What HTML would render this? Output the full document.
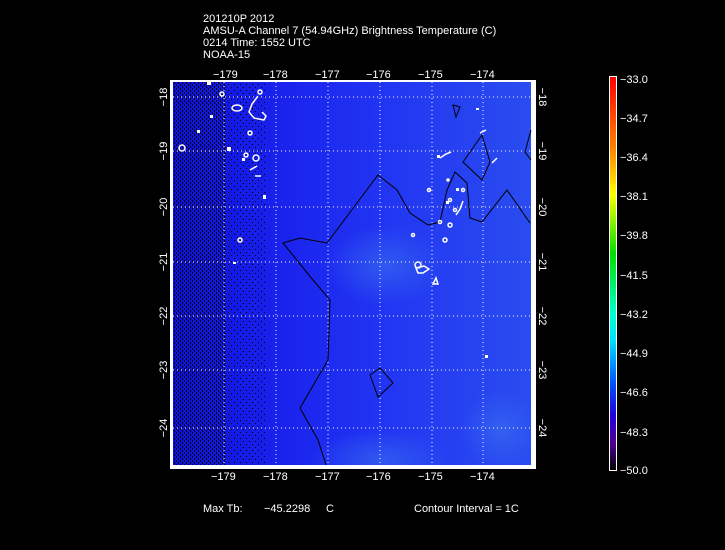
<!DOCTYPE html>
<html><head><style>
html,body{margin:0;padding:0;background:#000;width:725px;height:550px;overflow:hidden}
svg{display:block}
text{font-family:"Liberation Sans",sans-serif;fill:#fff;font-size:11px}
</style></head><body>
<svg width="725" height="550" viewBox="0 0 725 550">
<defs>
<linearGradient id="bg" x1="0" y1="0" x2="1" y2="0">
<stop offset="0" stop-color="#0c10d8"/>
<stop offset="0.3" stop-color="#1a22ee"/>
<stop offset="0.6" stop-color="#2236f2"/>
<stop offset="1" stop-color="#2a4cf0"/>
</linearGradient>
<radialGradient id="spot" cx="0.5" cy="0.5" r="0.5">
<stop offset="0" stop-color="#3a70f0" stop-opacity="0.6"/>
<stop offset="1" stop-color="#3a70f0" stop-opacity="0"/>
</radialGradient>
<linearGradient id="cb" x1="0" y1="0" x2="0" y2="1">
<stop offset="0" stop-color="#ff0000"/>
<stop offset="0.18" stop-color="#ff8000"/>
<stop offset="0.3" stop-color="#ffff00"/>
<stop offset="0.45" stop-color="#00e000"/>
<stop offset="0.6" stop-color="#00ffcc"/>
<stop offset="0.67" stop-color="#00e0ff"/>
<stop offset="0.78" stop-color="#0050ff"/>
<stop offset="0.86" stop-color="#2000e0"/>
<stop offset="0.93" stop-color="#500090"/>
<stop offset="1" stop-color="#000000"/>
</linearGradient>
<pattern id="hatch" width="4" height="4" patternUnits="userSpaceOnUse">
<rect x="0" y="0" width="1" height="2" fill="#000"/>
<rect x="2" y="2" width="1" height="2" fill="#000"/>
</pattern>
<pattern id="hatch2" width="6" height="6" patternUnits="userSpaceOnUse">
<rect x="0" y="0" width="1" height="1" fill="#000"/>
<rect x="3" y="3" width="1" height="1" fill="#000"/>
</pattern>
<clipPath id="plot"><rect x="173" y="82" width="358" height="383"/></clipPath>
</defs>
<text x="203" y="22">201210P 2012</text>
<text x="203" y="34">AMSU-A Channel 7 (54.94GHz) Brightness Temperature (C)</text>
<text x="203" y="46">0214 Time: 1552 UTC</text>
<text x="203" y="58">NOAA-15</text>

<rect x="170" y="80" width="366" height="389" fill="#fff"/>
<g clip-path="url(#plot)">
<rect x="173" y="82" width="358" height="383" fill="url(#bg)"/>
<ellipse cx="385" cy="265" rx="60" ry="40" fill="url(#spot)"/>
<ellipse cx="380" cy="460" rx="70" ry="30" fill="url(#spot)"/>
<ellipse cx="500" cy="430" rx="40" ry="40" fill="url(#spot)"/>
<rect x="173" y="82" width="52" height="383" fill="url(#hatch)"/>
<rect x="225" y="82" width="40" height="383" fill="url(#hatch2)"/>
</g>

<g stroke="#fff" stroke-width="1" stroke-dasharray="1,3" fill="none">
<line x1="224" y1="82" x2="224" y2="465"/><line x1="276" y1="82" x2="276" y2="465"/>
<line x1="328" y1="82" x2="328" y2="465"/><line x1="380" y1="82" x2="380" y2="465"/>
<line x1="432" y1="82" x2="432" y2="465"/><line x1="483" y1="82" x2="483" y2="465"/>
<line x1="173" y1="97" x2="531" y2="97"/><line x1="173" y1="151" x2="531" y2="151"/>
<line x1="173" y1="207" x2="531" y2="207"/><line x1="173" y1="262" x2="531" y2="262"/>
<line x1="173" y1="316" x2="531" y2="316"/><line x1="173" y1="370" x2="531" y2="370"/>
<line x1="173" y1="428" x2="531" y2="428"/>
</g>
<g stroke="#000" stroke-width="1" fill="none">
<polyline points="313,280 283,243 300,238 327,243 378,175 397,190 410,213 428,225 440,222 447,190 455,172 467,183 470,218 482,222 507,190 530,223"/>
<polyline points="313,280 330,300 328,360 300,408 318,440 326,465"/>
<polygon points="453,105 460,107 456,117"/>
<polygon points="482,135 463,162 482,180 490,162"/>
<polyline points="531,130 525,152 531,160"/>
<polygon points="370,375 380,368 393,383 378,397"/>
</g>
<g stroke="#fff" stroke-width="1.5" fill="none">
<circle cx="182" cy="148" r="3"/><circle cx="222" cy="94" r="2"/>
<path d="M258,96 l-6,8 l-3,8 l5,6 l10,2 l2,-4 l-4,-4"/>
<circle cx="260" cy="92" r="2"/>
<ellipse cx="237" cy="108" rx="5" ry="3"/>
<circle cx="250" cy="133" r="2"/><circle cx="246" cy="155" r="2"/>
<circle cx="256" cy="158" r="3"/><path d="M250,170 l7,-4 M255,176 l6,0"/>
<circle cx="240" cy="240" r="2"/><circle cx="418" cy="265" r="3"/>
<path d="M416,268 l8,-2 l5,3 l-6,4 l-5,0z"/>
<path d="M433,284 l3,-6 l2,6z"/>
<path d="M440,158 l6,-4 l5,-2"/><path d="M480,133 l6,-3"/>
<path d="M492,163 l5,-5"/>
<circle cx="450" cy="200" r="1.5"/><circle cx="455" cy="210" r="1.5"/>
<circle cx="463" cy="190" r="1.5"/><circle cx="450" cy="225" r="2"/>
<circle cx="445" cy="240" r="2"/><circle cx="413" cy="235" r="1.5"/>
<circle cx="440" cy="222" r="1.5"/><circle cx="429" cy="190" r="1.5"/>
<circle cx="448" cy="180" r="1"/>
<path d="M456,215 l4,-6 l3,-8"/>
</g>
<g fill="#fff">
<rect x="207" y="82" width="4" height="3"/><rect x="210" y="115" width="3" height="3"/>
<rect x="197" y="130" width="3" height="3"/><rect x="227" y="147" width="4" height="4"/>
<rect x="242" y="158" width="3" height="3"/><rect x="263" y="195" width="3" height="4"/>
<rect x="233" y="262" width="3" height="2"/><rect x="485" y="355" width="3" height="3"/>
<rect x="446" y="201" width="3" height="3"/><rect x="456" y="188" width="3" height="3"/>
<rect x="437" y="155" width="3" height="3"/><rect x="476" y="108" width="3" height="2"/>
</g>

<g>
<text x="213" y="78">−179</text><text x="263" y="78">−178</text><text x="315" y="78">−177</text>
<text x="366" y="78">−176</text><text x="418" y="78">−175</text><text x="470" y="78">−174</text>
<text x="211" y="480">−179</text><text x="263" y="480">−178</text><text x="315" y="480">−177</text>
<text x="366" y="480">−176</text><text x="418" y="480">−175</text><text x="470" y="480">−174</text>
</g>
<g text-anchor="middle">
<text transform="translate(167,97) rotate(-90)">−18</text>
<text transform="translate(167,151) rotate(-90)">−19</text>
<text transform="translate(167,207) rotate(-90)">−20</text>
<text transform="translate(167,262) rotate(-90)">−21</text>
<text transform="translate(167,316) rotate(-90)">−22</text>
<text transform="translate(167,370) rotate(-90)">−23</text>
<text transform="translate(167,428) rotate(-90)">−24</text>
<text transform="translate(539,97) rotate(90)">−18</text>
<text transform="translate(539,151) rotate(90)">−19</text>
<text transform="translate(539,207) rotate(90)">−20</text>
<text transform="translate(539,262) rotate(90)">−21</text>
<text transform="translate(539,316) rotate(90)">−22</text>
<text transform="translate(539,370) rotate(90)">−23</text>
<text transform="translate(539,428) rotate(90)">−24</text>
</g>

<rect x="609.5" y="76.5" width="7" height="394" fill="url(#cb)" stroke="#fff" stroke-width="1"/>
<g>
<text x="620" y="83">−33.0</text><text x="620" y="122">−34.7</text>
<text x="620" y="161">−36.4</text><text x="620" y="200">−38.1</text>
<text x="620" y="239">−39.8</text><text x="620" y="279">−41.5</text>
<text x="620" y="318">−43.2</text><text x="620" y="357">−44.9</text>
<text x="620" y="396">−46.6</text><text x="620" y="436">−48.3</text>
<text x="620" y="474">−50.0</text>
</g>

<text x="203" y="512">Max Tb:</text>
<text x="264" y="512">−45.2298</text>
<text x="326" y="512">C</text>
<text x="414" y="512">Contour Interval = 1C</text>
</svg>
</body></html>
